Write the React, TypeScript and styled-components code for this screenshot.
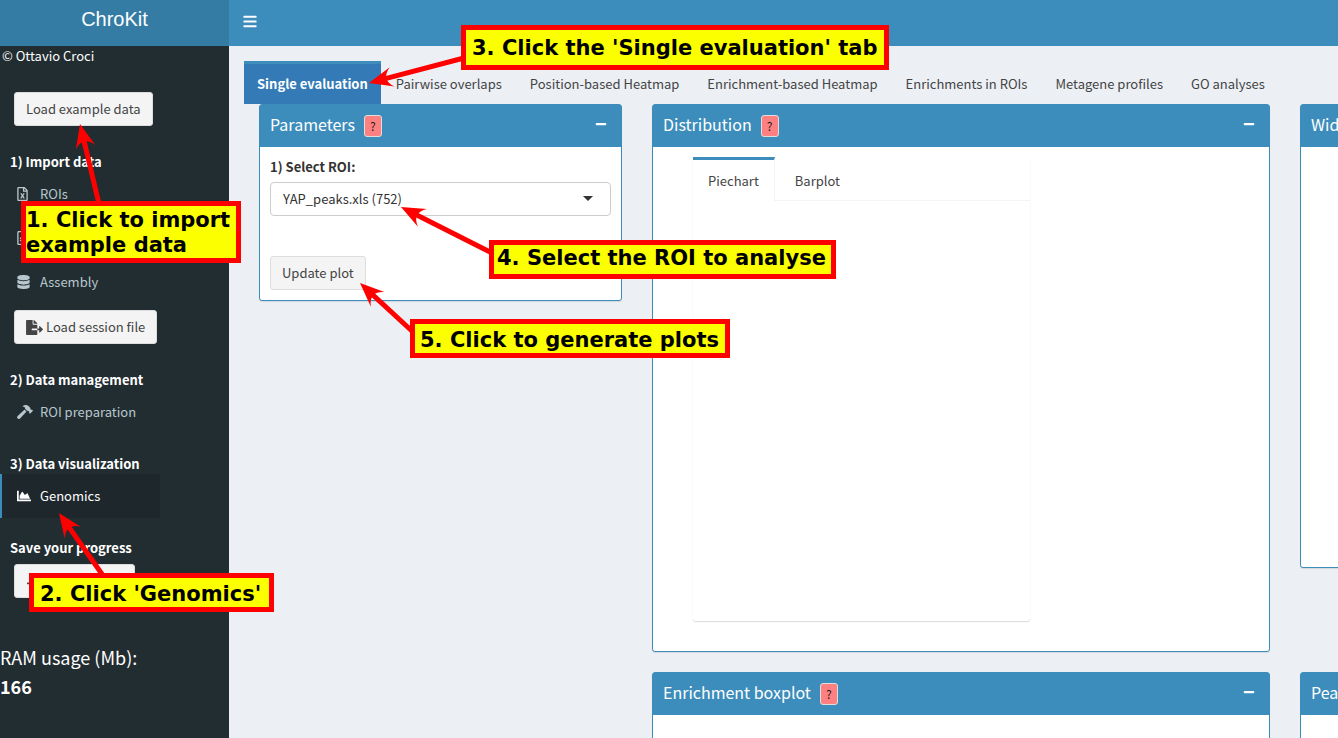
import React from "react";
import styled, { createGlobalStyle } from "styled-components";
import {
  FaBars,
  FaChartArea,
  FaDatabase,
  FaFileExport,
  FaFileImport,
  FaHammer,
  FaMinus,
  FaRegFileAlt,
  FaRegFileExcel,
} from "react-icons/fa";

const blue = "#3c8dbc";

const GlobalStyle = createGlobalStyle`
  * { box-sizing: border-box; }
  body {
    margin: 0;
    background: #ecf0f5;
    color: #333;
    font-family: "Noto Sans CJK SC", "Open Sans", sans-serif;
    font-size: 13px;
    line-height: 20px;
  }
  button, select { font: inherit; cursor: pointer; }
`;

const Shell = styled.div`
  position: relative;
  display: grid;
  grid-template-columns: 229px minmax(0, 1fr);
  grid-template-rows: 46px minmax(0, 1fr);
  height: 100vh;
  overflow: hidden;
`;

const Logo = styled.a`
  background: #357ca5;
  color: #fff;
  font: 20px/38px "Liberation Sans", Helvetica, sans-serif;
  text-align: center;
  text-decoration: none;
`;

const TopBar = styled.header`
  display: flex;
  align-items: center;
  padding: 0 14px 4px;
  background: ${blue};
`;

const MenuToggle = styled.button`
  display: flex;
  padding: 0;
  border: 0;
  background: none;
  color: #fff;
  svg { width: 14px; height: 15px; }
`;

const Sidebar = styled.aside`
  background: #222d32;
  color: #fff;
  overflow: hidden;
`;

const Copyright = styled.div`
  padding-left: 2px;
  margin-bottom: 26px;
`;

const SideHeading = styled.h2<{ $afterMenu?: boolean }>`
  margin: ${(p) => (p.$afterMenu ? 20 : 26)}px 0 0 10px;
  font-size: 13px;
  line-height: 20px;
  font-weight: 700;
`;

const Button = styled.button<{ $side?: boolean; $afterItem?: boolean }>`
  display: flex;
  align-items: center;
  gap: 3px;
  width: max-content;
  height: 34px;
  margin-top: ${(p) => (p.$afterItem ? 6 : 0)}px;
  margin-left: ${(p) => (p.$side ? 14 : 0)}px;
  padding: 0 11px;
  border: 1px solid #ddd;
  border-radius: 3px;
  background: #f4f4f4;
  color: #444;
  svg { width: 17px; height: 15px; }
`;

const Menu = styled.nav`
  display: flex;
  flex-direction: column;
  width: 160px;
`;

const MenuLink = styled.a<{ $active?: boolean }>`
  display: flex;
  align-items: center;
  gap: 2px;
  height: 44px;
  padding-left: 15px;
  border-left: 2px solid ${(p) => (p.$active ? blue : "transparent")};
  background: ${(p) => (p.$active ? "#1e282c" : "transparent")};
  color: ${(p) => (p.$active ? "#fff" : "#b8c7ce")};
  text-decoration: none;
`;

const MenuIcon = styled.span<{ $width: number }>`
  display: flex;
  width: 21px;
  svg { width: ${(p) => p.$width}px; height: 14px; }
`;

const Ram = styled.div`
  margin-top: 45px;
  font-size: 18px;
  line-height: 29px;
`;

const Main = styled.main`
  padding: 15px 0 0 15px;
  overflow: hidden;
`;

const Tabs = styled.div`
  display: flex;
  gap: 2px;
`;

const Tab = styled.button<{ $active?: boolean }>`
  height: 43px;
  padding: 0 13px;
  border: 0;
  border-top: 3px solid ${(p) => (p.$active ? blue : "transparent")};
  background: ${(p) => (p.$active ? "#337ab7" : "transparent")};
  color: ${(p) => (p.$active ? "#fff" : "#444")};
  font-weight: ${(p) => (p.$active ? 700 : 400)};
  white-space: nowrap;
`;

/* The last column runs past the right edge of the window. */
const Board = styled.div`
  display: grid;
  grid-template-columns: 363px minmax(0, 1fr) 363px;
  gap: 20px 30px;
  align-items: start;
  margin: 0 -325px 0 15px;
`;

const Panel = styled.section<{ $column: number }>`
  grid-column: ${(p) => p.$column};
  border: 1px solid ${blue};
  border-radius: 3px;
  background: #fff;
  box-shadow: 0 1px 1px rgba(0, 0, 0, 0.1);
`;

const PanelHeader = styled.header`
  display: flex;
  align-items: flex-start;
  gap: 9px;
  height: 42px;
  padding: 10px;
  background: ${blue};
  color: #fff;
`;

const PanelTitle = styled.h3`
  margin: 0;
  font-size: 16px;
  line-height: 18px;
  font-weight: 400;
  white-space: nowrap;
`;

const HelpButton = styled.button`
  width: 18px;
  height: 22px;
  padding: 0;
  border: 1px solid #ddd;
  border-radius: 3px;
  background: #ff8080;
  color: #222;
  font-size: 12px;
  line-height: 18px;
`;

const CollapseButton = styled.button`
  display: flex;
  margin: 3px 4px 0 auto;
  padding: 0;
  border: 0;
  background: none;
  color: #fff;
  svg { width: 12px; height: 12px; }
`;

const PanelBody = styled.div<{ $height?: number }>`
  min-height: ${(p) => p.$height ?? 0}px;
  padding: 10px;
`;

const Label = styled.label`
  display: block;
  margin-bottom: 5px;
  font-weight: 700;
`;

const SelectWrap = styled.div`
  position: relative;
  margin-bottom: 40px;
`;

const Select = styled.select`
  appearance: none;
  display: block;
  width: 100%;
  height: 34px;
  padding: 0 12px;
  border: 1px solid #ccc;
  border-radius: 4px;
  background: #fff;
  color: #333;
`;

const Caret = styled.span`
  position: absolute;
  top: 14px;
  right: 18px;
  border: 5px solid transparent;
  border-top-color: #333;
  border-bottom: 0;
  pointer-events: none;
`;

const PlotTabs = styled.div`
  width: 337px;
  max-width: 100%;
  margin-left: 30px;
  min-height: 464px;
  border-radius: 3px;
  box-shadow: 0 1px 1px rgba(0, 0, 0, 0.1), 0 1px 2px rgba(0, 0, 0, 0.06);
`;

const PlotTabBar = styled.div`
  display: flex;
  gap: 5px;
  border-bottom: 1px solid #f4f4f4;
`;

const PlotTab = styled.button<{ $active?: boolean }>`
  height: 44px;
  margin-bottom: -1px;
  padding: 0 15px;
  border: 0;
  border-top: 3px solid ${(p) => (p.$active ? blue : "transparent")};
  border-right: 1px solid ${(p) => (p.$active ? "#f4f4f4" : "transparent")};
  background: ${(p) => (p.$active ? "#fff" : "transparent")};
  color: #444;
`;

const Callout = styled.div<{ $x: number; $y: number; $w: number; $h: number; $pad: string }>`
  position: absolute;
  left: ${(p) => p.$x}px;
  top: ${(p) => p.$y}px;
  width: ${(p) => p.$w}px;
  height: ${(p) => p.$h}px;
  padding: ${(p) => p.$pad};
  border: 5px solid #f00;
  background: #fbff00;
  color: #000;
  font: 700 21px/25px "DejaVu Sans", sans-serif;
  white-space: nowrap;
`;

const Arrows = styled.svg`
  position: absolute;
  inset: 0;
  width: 100%;
  height: 100%;
  pointer-events: none;
`;

type Point = [number, number];

const arrows: { tip: Point; tail: Point }[] = [
  { tip: [80, 124], tail: [99, 204] },
  { tip: [59, 513], tail: [104, 577] },
  { tip: [369, 83], tail: [464, 58] },
  { tip: [401, 207], tail: [492, 253] },
  { tip: [360, 283], tail: [413, 332] },
];

function Arrow({ tip, tail }: { tip: Point; tail: Point }) {
  const dx = tail[0] - tip[0];
  const dy = tail[1] - tip[1];
  const angle = (Math.atan2(dy, dx) * 180) / Math.PI;
  return (
    <g transform={`translate(${tip[0]} ${tip[1]}) rotate(${angle})`}>
      <path d={`M16 0H${Math.hypot(dx, dy)}`} stroke="#f00" strokeWidth="5" />
      <path d="M0 0L24 -10Q18 -5 18 0Q18 5 24 10Z" fill="#f00" />
    </g>
  );
}

function Box(props: { title: string; column: number; height?: number; children?: React.ReactNode }) {
  return (
    <Panel $column={props.column}>
      <PanelHeader>
        <PanelTitle>{props.title}</PanelTitle>
        <HelpButton aria-label={`Help: ${props.title}`}>?</HelpButton>
        <CollapseButton aria-label={`Collapse ${props.title}`}>
          <FaMinus />
        </CollapseButton>
      </PanelHeader>
      <PanelBody $height={props.height}>{props.children}</PanelBody>
    </Panel>
  );
}

const pages = [
  "Single evaluation",
  "Pairwise overlaps",
  "Position-based Heatmap",
  "Enrichment-based Heatmap",
  "Enrichments in ROIs",
  "Metagene profiles",
  "GO analyses",
];

function MenuItem(props: { icon: React.ReactNode; iconWidth: number; label: string; active?: boolean }) {
  return (
    <MenuLink href="#" $active={props.active}>
      <MenuIcon $width={props.iconWidth}>{props.icon}</MenuIcon>
      {props.label}
    </MenuLink>
  );
}

export default function App() {
  return (
    <Shell>
      <GlobalStyle />
      <Logo href="#">ChroKit</Logo>
      <TopBar>
        <MenuToggle aria-label="Toggle navigation">
          <FaBars />
        </MenuToggle>
      </TopBar>

      <Sidebar>
        <Copyright>© Ottavio Croci</Copyright>
        <Button $side>Load example data</Button>
        <SideHeading>1) Import data</SideHeading>
        <Menu>
          <MenuItem icon={<FaRegFileExcel />} iconWidth={11} label="ROIs" />
          <MenuItem icon={<FaRegFileAlt />} iconWidth={11} label="Enrichments" />
          <MenuItem icon={<FaDatabase />} iconWidth={13} label="Assembly" />
        </Menu>
        <Button $side $afterItem>
          <FaFileExport />
          Load session file
        </Button>
        <SideHeading>2) Data management</SideHeading>
        <Menu>
          <MenuItem icon={<FaHammer />} iconWidth={16} label="ROI preparation" />
        </Menu>
        <SideHeading $afterMenu>3) Data visualization</SideHeading>
        <Menu>
          <MenuItem icon={<FaChartArea />} iconWidth={14} label="Genomics" active />
        </Menu>
        <SideHeading $afterMenu>Save your progress</SideHeading>
        <Button $side $afterItem>
          <FaFileImport />
          Save session
        </Button>
        <Ram>
          RAM usage (Mb):
          <br />
          <b>166</b>
        </Ram>
      </Sidebar>

      <Main>
        <Tabs role="tablist">
          {pages.map((page, i) => (
            <Tab key={page} role="tab" aria-selected={i === 0} $active={i === 0}>
              {page}
            </Tab>
          ))}
        </Tabs>
        <Board>
          <Box title="Parameters" column={1}>
            <Label htmlFor="roi">1) Select ROI:</Label>
            <SelectWrap>
              <Select id="roi">
                <option>YAP_peaks.xls (752)</option>
              </Select>
              <Caret />
            </SelectWrap>
            <Button>Update plot</Button>
          </Box>
          <Box title="Distribution" column={2} height={504}>
            <PlotTabs>
              <PlotTabBar role="tablist">
                <PlotTab role="tab" aria-selected $active>
                  Piechart
                </PlotTab>
                <PlotTab role="tab" aria-selected={false}>
                  Barplot
                </PlotTab>
              </PlotTabBar>
            </PlotTabs>
          </Box>
          <Box title="Width distribution" column={3} height={420} />
          <Box title="Enrichment boxplot" column={2} height={420} />
          <Box title="Peaks location" column={3} height={420} />
        </Board>
      </Main>

      <Arrows aria-hidden="true">
        {arrows.map((a, i) => (
          <Arrow key={i} {...a} />
        ))}
      </Arrows>
      <Callout $x={21} $y={201} $w={220} $h={62} $pad="2px 0 0">
        1. Click to import
        <br />
        example data
      </Callout>
      <Callout $x={29} $y={573} $w={245} $h={39} $pad="4px 6px 0">2. Click 'Genomics'</Callout>
      <Callout $x={461} $y={25} $w={428} $h={45} $pad="6px 6px 0">3. Click the 'Single evaluation' tab</Callout>
      <Callout $x={489} $y={240} $w={347} $h={39} $pad="1px 3px 0">4. Select the ROI to analyse</Callout>
      <Callout $x={410} $y={319} $w={320} $h={39} $pad="4px 5px 0">5. Click to generate plots</Callout>
    </Shell>
  );
}
